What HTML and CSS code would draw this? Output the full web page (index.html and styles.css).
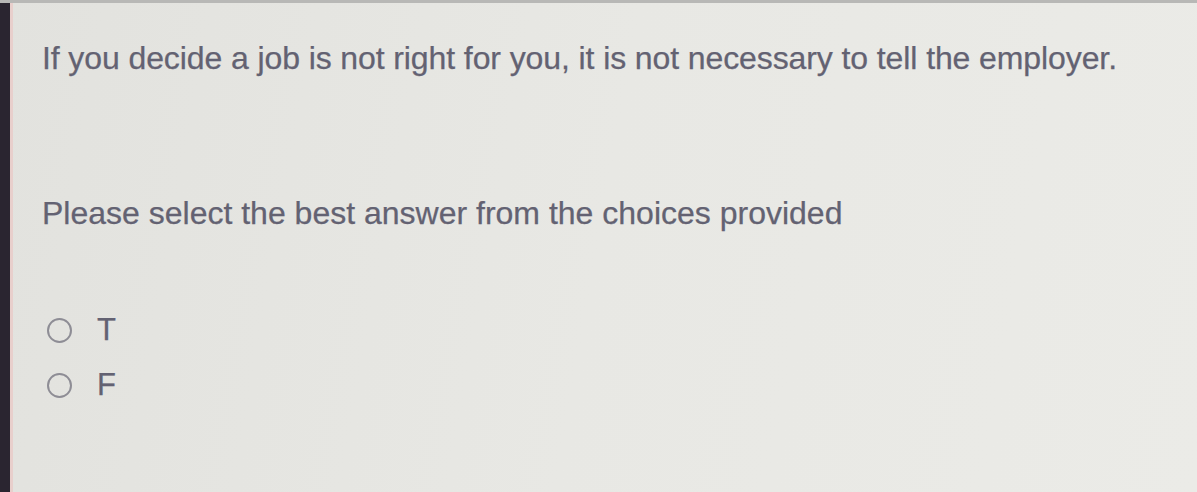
FILE: index.html
```html
<!DOCTYPE html>
<html>
<head>
<meta charset="utf-8">
<link rel="stylesheet" href="styles.css">
</head>
<body>
<div class="screen">
  <div class="bezel"></div>
  <main class="content">
    <p class="question">If you decide a job is not right for you, it is not necessary to tell the employer.</p>
    <p class="prompt">Please select the best answer from the choices provided</p>
    <div class="choices">
      <label class="choice"><span class="radio"></span><span class="label">T</span></label>
      <label class="choice"><span class="radio"></span><span class="label">F</span></label>
    </div>
  </main>
</div>
</body>
</html>
```
FILE: styles.css
```css
html, body {
  margin: 0;
  padding: 0;
  width: 1197px;
  height: 492px;
  overflow: hidden;
}
.screen {
  display: flex;
  width: 1197px;
  height: 492px;
  background: linear-gradient(100deg, #e2e2de 0%, #e8e8e4 50%, #ebebe7 100%);
  border-top: 3px solid #b8b8b6;
  box-sizing: border-box;
}
.bezel {
  width: 10px;
  flex: none;
  background: #2a2530;
  border-right: 3px solid #e8cfcc;
}
.content {
  flex: 1;
  padding-left: 29px;
  font-family: "Liberation Sans", Arial, sans-serif;
  color: #636272;
  -webkit-text-stroke: 0.25px #636272;
}
.question {
  margin: 35px 0 0 0;
  font-size: 32px;
  line-height: 40px;
  letter-spacing: -0.1px;
}
.prompt {
  margin: 115px 0 0 0;
  font-size: 32px;
  line-height: 40px;
}
.choices {
  margin-top: 84px;
  display: flex;
  flex-direction: column;
  gap: 29px;
}
.choice {
  display: flex;
  align-items: center;
  gap: 25px;
  padding-left: 5px;
  height: 26px;
}
.radio {
  width: 21px;
  height: 21px;
  border: 2px solid #8e8d95;
  border-radius: 50%;
  flex: none;
}
.label {
  font-size: 31px;
  line-height: 26px;
}
```
